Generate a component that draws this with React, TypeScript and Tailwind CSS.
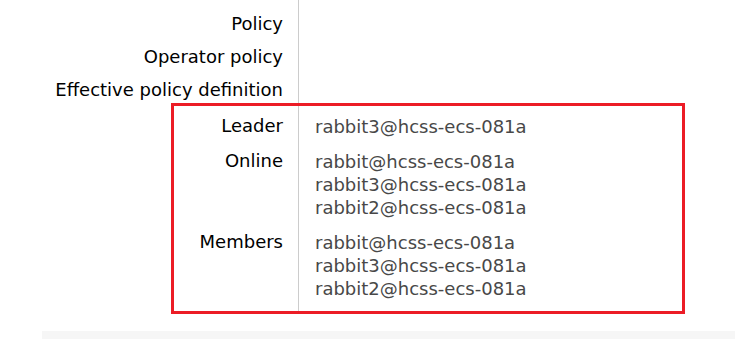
import React from "react";

type Fact = { label: string; values: string[] };

const policyRows = ["Policy", "Operator policy", "Effective policy definition"];

const nodeFacts: Fact[] = [
  { label: "Leader", values: ["rabbit3@hcss-ecs-081a"] },
  { label: "Online", values: ["rabbit@hcss-ecs-081a", "rabbit3@hcss-ecs-081a", "rabbit2@hcss-ecs-081a"] },
  { label: "Members", values: ["rabbit@hcss-ecs-081a", "rabbit3@hcss-ecs-081a", "rabbit2@hcss-ecs-081a"] },
];

export default function App() {
  return (
    <div className="relative h-[339px] w-[735px] overflow-hidden bg-white font-['DejaVu_Sans',Verdana,sans-serif] text-[18px] leading-[23px]">
      <div>
        {policyRows.map((label, i) => (
          <div key={label} className="flex">
            <div className={`w-[299px] shrink-0 border-r border-[#cccccc] pb-[5px] pr-[15px] text-right text-black ${i === 0 ? "pt-[12px]" : "pt-[5px]"}`}>
              {label}
            </div>
            <div className="flex-1" />
          </div>
        ))}
        {nodeFacts.map((fact, i) => (
          <FactRow key={fact.label} fact={fact} last={i === nodeFacts.length - 1} />
        ))}
      </div>
      <div className="ml-[42px] mt-[19px] h-[20px] bg-[#f6f6f6]" />
      <div className="pointer-events-none absolute left-[171px] top-[103px] h-[211px] w-[514px] border-[3px] border-[#ec1c26]" />
    </div>
  );
}

function FactRow({ fact, last }: { fact: Fact; last: boolean }) {
  return (
    <div className="flex">
      <div className={`w-[299px] shrink-0 border-r border-[#cccccc] pt-[8px] pr-[15px] text-right text-black ${last ? "pb-[13px]" : "pb-[4px]"}`}>
        {fact.label}
      </div>
      <div className={`flex-1 pl-[16px] pt-[9px] text-[#484848] ${last ? "pb-[12px]" : "pb-[3px]"}`}>
        {fact.values.map((v, i) => (
          <div key={i}>{v}</div>
        ))}
      </div>
    </div>
  );
}
